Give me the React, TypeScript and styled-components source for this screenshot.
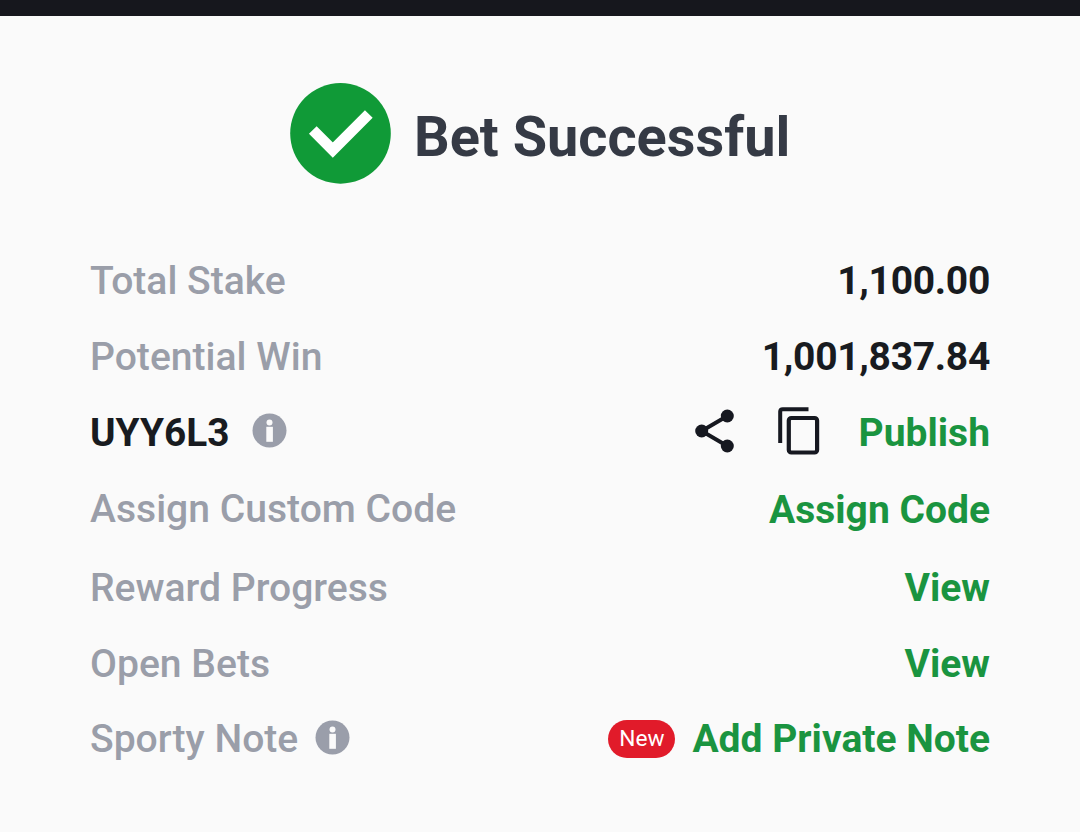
import React from "react";
import styled, { createGlobalStyle } from "styled-components";

const GlobalStyle = createGlobalStyle`
  * { box-sizing: border-box; }
  body { margin: 0; background: #fafafa; font-family: Roboto, sans-serif; }
`;
const Page = styled.main`
  width: 1080px; height: 832px; overflow: hidden; background: #fafafa;
`;
const TopBar = styled.div`height: 16px; background: #16171d;`;
const Header = styled.header`
  display: flex; align-items: center; gap: 22px; height: 102px;
  margin: 66px 0 0 290px;
`;
const Title = styled.h1`
  margin: 8px 0 0; font-size: 55.9px; line-height: 66px; font-weight: 700;
  color: #353a45; white-space: nowrap;
`;
const List = styled.section`padding: 59px 90px 0;`;
const Row = styled.div<{ $height?: number }>`
  display: flex; justify-content: space-between; align-items: center;
  height: ${p => p.$height ?? 76}px;
`;
const Group = styled.div`display: flex; align-items: center;`;
const Label = styled.span`
  font-size: 39.1px; line-height: 46px; color: #9a9ea9; font-weight: 500;
  white-space: nowrap;
`;
const Value = styled(Label)`font-size: 38.8px; color: #181b20; font-weight: 700;`;
const Amount = styled(Value)`font-size: 39px; letter-spacing: -0.3px;`;
const Action = styled(Value)<{ $drop?: number }>`
  font-size: 39px; color: #1a9440; padding-top: ${p => p.$drop ?? 0}px;
`;
const Badge = styled.span`
  width: 67px; height: 38px; border-radius: 19px; background: #e11b2a; color: #fff;
  font-size: 22.7px; line-height: 38px; text-align: center; margin-right: 17px;
`;
const Icon = styled.svg<{ $gap?: number; $lift?: number }>`
  display: block; flex: none; margin-right: ${p => p.$gap ?? 0}px; margin-bottom: ${p => p.$lift ?? 0}px;
`;
const InfoSvg = styled.svg<{ $gap: number; $lift: number }>`
  display: block; margin: 0 0 ${p => p.$lift}px ${p => p.$gap}px;
`;

const dark = "#161820";

const Info = ({ gap, lift }: { gap: number; lift: number }) => (
  <InfoSvg $gap={gap} $lift={lift} width="35" height="35" viewBox="0 0 35 35">
    <circle cx="17.5" cy="17.5" r="17" fill="#9a9eaa" />
    <circle cx="17.5" cy="9.4" r="3" fill="#fafafa" />
    <rect x="14.3" y="13.8" width="6.6" height="15" fill="#fafafa" />
  </InfoSvg>
);

export default function App() {
  return (
    <Page>
      <GlobalStyle />
      <TopBar />
      <Header>
        <Icon width="102" height="102" viewBox="0 0 102 102">
          <circle cx="50.5" cy="51.4" r="50.3" fill="#109a37" />
          <path d="M22.8 48L42.8 68L78.8 32" fill="none" stroke="#fff" strokeWidth="10.9" />
        </Icon>
        <Title>Bet Successful</Title>
      </Header>
      <List>
        <Row><Label>Total Stake</Label><Amount>1,100.00</Amount></Row>
        <Row><Label>Potential Win</Label><Amount>1,001,837.84</Amount></Row>
        <Row>
          <Group><Value>UYY6L3</Value><Info gap={23} lift={6} /></Group>
          <Group>
            <Icon $gap={43} $lift={5} width="40" height="46" viewBox="0 0 40 46">
              <path d="M32.3 8L6.7 23L32.3 38" fill="none" stroke={dark} strokeWidth="4" />
              <circle cx="32.3" cy="8" r="6.5" fill={dark} /><circle cx="6.7" cy="23" r="6.5" fill={dark} /><circle cx="32.3" cy="38" r="6.5" fill={dark} />
            </Icon>
            <Icon $gap={39} $lift={3} width="42" height="50" viewBox="0 0 42 50">
              <path d="M2.2 36V4.5Q2.2 2.2 4.7 2.2H30.5" fill="none" stroke={dark} strokeWidth="4" />
              <rect x="10.8" y="11" width="28.3" height="34.5" rx="2.5" fill="none" stroke={dark} strokeWidth="4.2" />
            </Icon>
            <Action>Publish</Action>
          </Group>
        </Row>
        <Row><Label>Assign Custom Code</Label><Action $drop={2}>Assign Code</Action></Row>
        <Row $height={81}><Label>Reward Progress</Label><Action>View</Action></Row>
        <Row $height={72}><Label>Open Bets</Label><Action>View</Action></Row>
        <Row $height={78}>
          <Group><Label>Sporty Note</Label><Info gap={17} lift={4} /></Group>
          <Group><Badge>New</Badge><Action>Add Private Note</Action></Group>
        </Row>
      </List>
    </Page>
  );
}
